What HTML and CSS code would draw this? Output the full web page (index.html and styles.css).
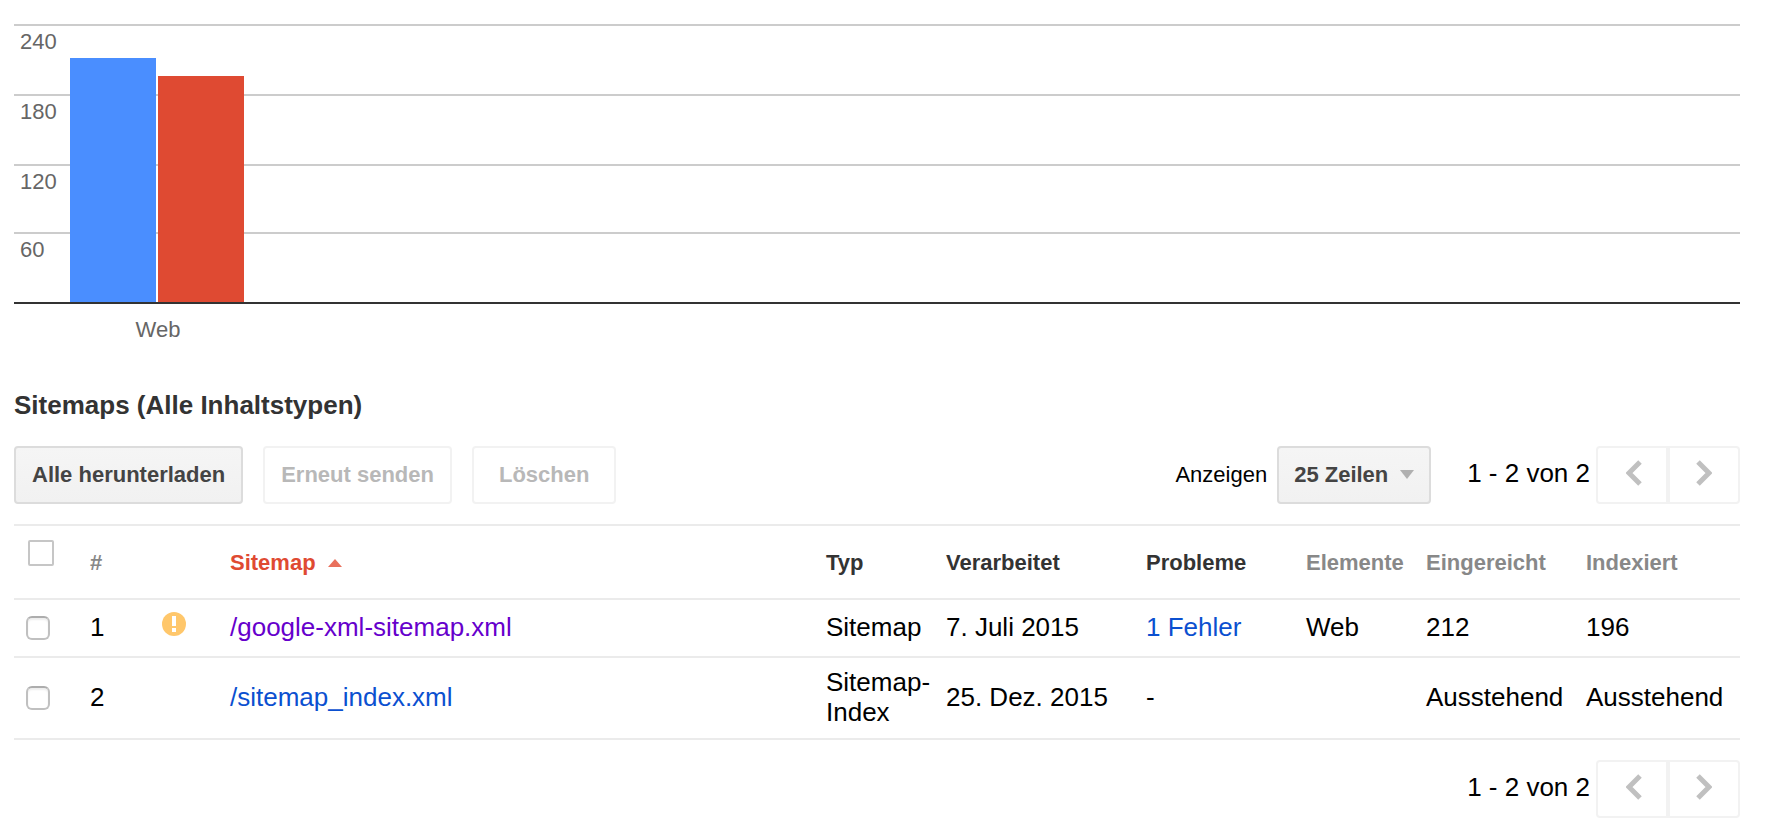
FILE: index.html
```html
<!DOCTYPE html>
<html lang="de">
<head>
<meta charset="UTF-8">
<meta name="viewport" content="width=device-width, initial-scale=1.0">
<title>Sitemaps</title>
<link rel="stylesheet" href="styles.css">
</head>
<body>

<div class="chart">
    <div class="plot">
        <div class="tick">240</div>
        <div class="tick">180</div>
        <div class="tick">120</div>
        <div class="tick">60</div>
        <div class="bars">
            <div class="bar submitted"></div>
            <div class="bar indexed"></div>
        </div>
    </div>
    <div class="chartLabel">Web</div>
</div>

<h2>Sitemaps (Alle Inhaltstypen)</h2>

<div class="toolbar">
    <button class="btn" type="button">Alle herunterladen</button>
    <button class="btn" type="button" disabled>Erneut senden</button>
    <button class="btn delete" type="button" disabled>Löschen</button>
    <div class="rows">
        <label for="rowCount">Anzeigen</label>
        <div class="selectBox">
            <select id="rowCount">
                <option>25 Zeilen</option>
                <option>50 Zeilen</option>
                <option>100 Zeilen</option>
            </select>
        </div>
    </div>
    <div class="pager">
        <span class="range">1 - 2 von 2</span>
        <button class="prev" type="button" aria-label="Zurück" disabled>
            <svg width="16" height="26" viewBox="0 0 16 26"><path d="M14 2L3 13l11 11" /></svg>
        </button>
        <button class="next" type="button" aria-label="Weiter" disabled>
            <svg width="16" height="26" viewBox="0 0 16 26"><path d="M2 2l11 11L2 24" /></svg>
        </button>
    </div>
</div>

<table>
    <colgroup>
        <col class="colCheck">
        <col class="colNumber">
        <col class="colStatus">
        <col>
        <col class="colType">
        <col class="colDate">
        <col class="colProblems">
        <col class="colItems">
        <col class="colSubmitted">
        <col class="colIndexed">
    </colgroup>
    <thead>
        <tr>
            <th class="checkAll"><input type="checkbox" aria-label="Alle auswählen"></th>
            <th class="muted">#</th>
            <th></th>
            <th class="sorted">Sitemap <svg width="14" height="8" viewBox="0 0 14 8"><path d="M7 0l7 8H0z" fill="#e9705c" /></svg></th>
            <th>Typ</th>
            <th>Verarbeitet</th>
            <th>Probleme</th>
            <th class="muted">Elemente</th>
            <th class="muted">Eingereicht</th>
            <th class="muted">Indexiert</th>
        </tr>
    </thead>
    <tbody>
        <tr>
            <td class="check"><input type="checkbox" aria-label="/google-xml-sitemap.xml auswählen"></td>
            <td>1</td>
            <td>
                <svg class="warning" width="24" height="24" viewBox="0 0 24 24">
                    <circle cx="12" cy="12" r="12" fill="#ffc76b" />
                    <path d="M10 4h4v10h-4zM10 16h4v4h-4z" fill="#fff" />
                </svg>
            </td>
            <td><a class="visited" href="#">/google-xml-sitemap.xml</a></td>
            <td>Sitemap</td>
            <td>7. Juli 2015</td>
            <td><a href="#">1 Fehler</a></td>
            <td>Web</td>
            <td>212</td>
            <td>196</td>
        </tr>
        <tr>
            <td class="check"><input type="checkbox" aria-label="/sitemap_index.xml auswählen"></td>
            <td>2</td>
            <td></td>
            <td><a href="#">/sitemap_index.xml</a></td>
            <td>Sitemap-Index</td>
            <td>25. Dez. 2015</td>
            <td>-</td>
            <td></td>
            <td>Ausstehend</td>
            <td>Ausstehend</td>
        </tr>
    </tbody>
</table>

<div class="pager bottom">
    <span class="range">1 - 2 von 2</span>
    <button class="prev" type="button" aria-label="Zurück" disabled>
        <svg width="16" height="26" viewBox="0 0 16 26"><path d="M14 2L3 13l11 11" /></svg>
    </button>
    <button class="next" type="button" aria-label="Weiter" disabled>
        <svg width="16" height="26" viewBox="0 0 16 26"><path d="M2 2l11 11L2 24" /></svg>
    </button>
</div>

</body>
</html>
```

FILE: styles.css
```css
* {
    box-sizing: border-box;
}

body {
    margin: 0;
    padding: 24px 26px 12px 14px;
    background: #fff;
    color: #000;
    font-family: Arial, "Liberation Sans", sans-serif;
    font-size: 26px;
    line-height: 30px;
}

/* Chart */
.plot {
    position: relative;
    display: grid;
    grid-template-rows: 70px 70px 68px 70px;
    border-bottom: 2px solid #333;
}

.tick {
    border-top: 2px solid #ccc;
    padding: 4px 6px;
    color: #666;
    font-size: 22px;
    line-height: 24px;
}

/* bars lie over the grid lines */
.bars {
    position: absolute;
    left: 56px;
    bottom: 0;
    display: flex;
    align-items: flex-end;
    gap: 2px;
}

.bar {
    width: 86px;
}

.submitted {
    height: 244px;
    background: #4a8eff;
}

.indexed {
    height: 226px;
    background: #df4a32;
}

.chartLabel {
    width: 176px;
    margin-left: 56px;
    padding-top: 14px;
    color: #666;
    font-size: 22px;
    line-height: 24px;
    text-align: center;
}

h2 {
    margin: 48px 0 26px;
    color: #333;
    font-size: 26px;
    line-height: 30px;
}

/* Toolbar */
.toolbar {
    display: flex;
    align-items: center;
    gap: 20px;
    margin-bottom: 20px;
}

.btn,
select {
    height: 58px;
    padding: 0 16px;
    border: 2px solid #dcdcdc;
    border-radius: 4px;
    background: linear-gradient(#f5f5f5, #f1f1f1);
    color: #444;
    font-family: inherit;
    font-size: 22px;
    font-weight: bold;
}

.btn:disabled {
    border-color: #f2f2f2;
    background: #fff;
    color: #b8b8b8;
}

.btn.delete {
    padding: 0 25px;
}

.rows {
    display: flex;
    align-items: center;
    gap: 10px;
    margin-left: auto;
    font-size: 22px;
}

.selectBox {
    position: relative;
}

.selectBox::after {
    content: "";
    position: absolute;
    top: 24px;
    right: 17px;
    border: 7px solid transparent;
    border-top: 9px solid #b0b0b0;
    border-bottom: 0;
    pointer-events: none;
}

select {
    width: 154px;
    padding: 0 15px 2px;
    appearance: none;
}

.pager {
    display: flex;
    align-items: center;
    margin-left: 16px;
}

.range {
    padding: 0 6px 4px 0;
}

.pager button {
    display: flex;
    align-items: center;
    justify-content: center;
    width: 72px;
    height: 58px;
    padding: 0 0 4px;
    border: 2px solid #f2f2f2;
    background: #fff;
}

.pager .prev {
    border-radius: 4px 0 0 4px;
    padding-left: 4px;
}

.pager .next {
    border-radius: 0 4px 4px 0;
}

.pager path {
    fill: none;
    stroke: #c0c0c0;
    stroke-width: 5;
}

.bottom {
    justify-content: flex-end;
    margin-top: 20px;
}

/* Table */
table {
    width: 100%;
    table-layout: fixed;
    border-spacing: 0;
    border-top: 2px solid #ebebeb;
}

.colCheck { width: 76px; }
.colNumber { width: 72px; }
.colStatus { width: 68px; }
.colType,
.colItems { width: 120px; }
.colDate { width: 200px; }
.colProblems,
.colSubmitted { width: 160px; }
.colIndexed { width: 154px; }

th,
td {
    padding: 0;
    border-bottom: 2px solid #ebebeb;
    text-align: left;
}

th {
    height: 74px;
    padding-top: 2px;
    color: #333;
    font-size: 22px;
}

td {
    height: 58px;
    padding-bottom: 2px;
}

tbody tr:last-child td {
    height: 82px;
}

.muted {
    color: #888;
}

.sorted {
    color: #df4a32;
}

.sorted svg {
    margin: 0 0 3px 6px;
}

input {
    display: block;
    width: 24px;
    height: 24px;
    margin: 0;
    appearance: none;
    border: 2px solid #c0c0c0;
    border-top-color: #adadad;
    border-radius: 6px;
    background: #fff;
    box-shadow: inset 0 2px 2px #eee;
}

.check {
    padding: 0 0 0 12px;
}

.checkAll {
    padding: 14px 0 0 14px;
    vertical-align: top;
}

.checkAll input {
    width: 26px;
    height: 26px;
    border-color: #c6c6c6;
    border-radius: 2px;
    box-shadow: none;
}

.warning {
    display: block;
    margin-bottom: 6px;
}

a {
    color: #0b50d0;
    text-decoration: none;
}

a.visited {
    color: #6600cc;
}
```
